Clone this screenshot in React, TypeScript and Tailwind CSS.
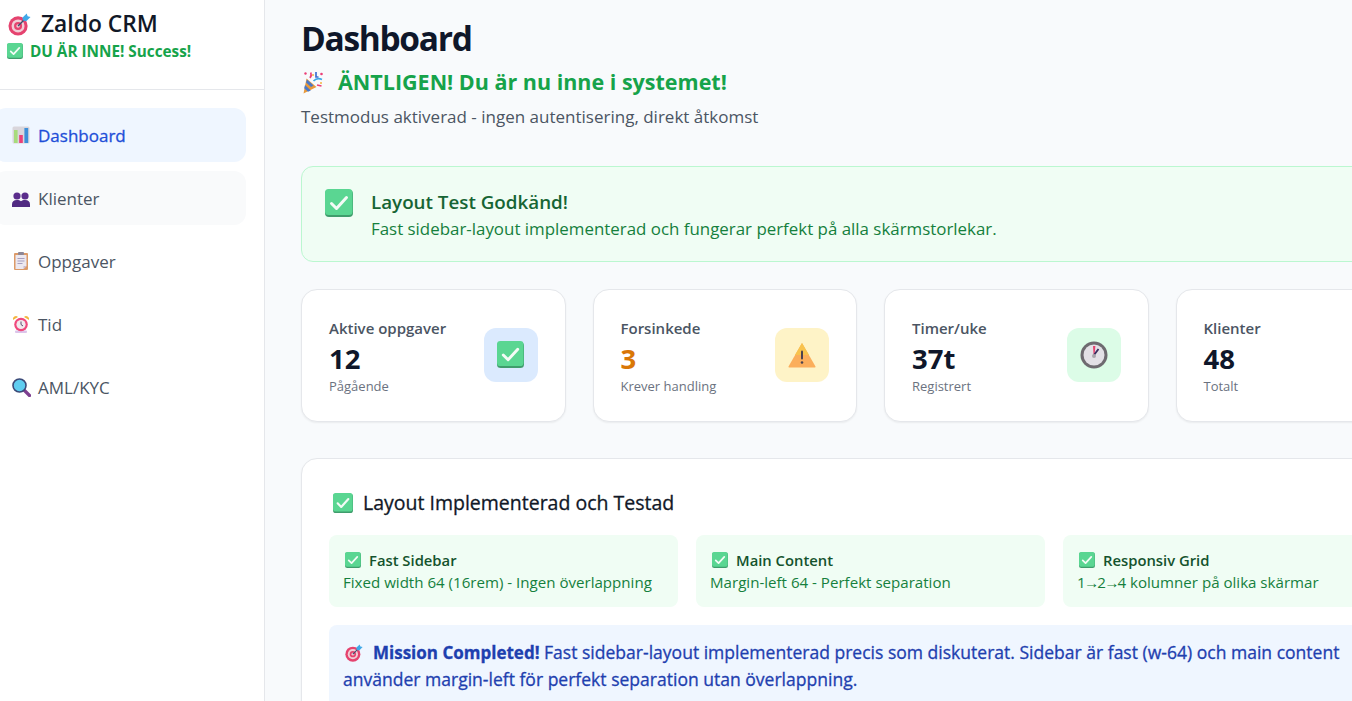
import type { ReactNode } from 'react'

// Emoji drawings, the page has no colour emoji font
function CheckIcon({ size }: { size: number }) {
  return (
    <svg width={size} height={size} viewBox="0 0 28 28" className="shrink-0">
      <rect x="0" y="1" width="28" height="27" rx="4" fill="#3f9d6c" />
      <rect x="0" y="0" width="27.5" height="26" rx="3.5" fill="#5ad692" />
      <path d="M6.5 14.5l5 5L21.5 8.5" fill="none" stroke="#f4fbf6" strokeWidth="3" strokeLinecap="round" strokeLinejoin="round" />
    </svg>
  )
}

function TargetIcon({ size }: { size: number }) {
  return (
    <svg width={size} height={size} viewBox="0 0 24 24" className="shrink-0">
      <circle cx="10.5" cy="13.5" r="10" fill="#e5436f" />
      <circle cx="10.5" cy="13.5" r="6.8" fill="#f1cdd6" />
      <circle cx="10.5" cy="13.5" r="4.2" fill="#e5436f" />
      <circle cx="10.5" cy="13.5" r="1.8" fill="#f1cdd6" />
      <path d="M10.5 13.5L20 4" stroke="#36506e" strokeWidth="1.4" />
      <path d="M15 5L19.500 .5l1 2.800 3 .8-4.500 4.400-3.300-.6z" fill="#3fa9e8" />
    </svg>
  )
}

function ChartIcon() {
  return (
    <svg width="18" height="18" viewBox="0 0 18 18" className="shrink-0">
      <rect x="0.5" y="0.5" width="17" height="17" rx="1.5" fill="#d9d6dc" />
      <rect x="2" y="4" width="3.6" height="13" fill="#a7dc7c" />
      <rect x="7.2" y="9" width="3.6" height="8" fill="#ec3f78" />
      <rect x="12.4" y="2" width="3.8" height="15" fill="#3d8fd9" />
    </svg>
  )
}

function PeopleIcon() {
  return (
    <svg width="18" height="18" viewBox="0 0 18 18" className="shrink-0">
      <circle cx="5" cy="7" r="3.6" fill="#5b2d8c" />
      <circle cx="13" cy="7" r="3.6" fill="#5b2d8c" />
      <path d="M0 15.500c0-3 1.600-4.500 5-4.500 1.700 0 3 .4 4 1.300 1-.9 2.300-1.300 4-1.300 3.400 0 5 1.500 5 4.500V18H0z" fill="#512a82" />
    </svg>
  )
}

function ClipboardIcon() {
  return (
    <svg width="18" height="18" viewBox="0 0 18 18" className="shrink-0">
      <rect x="2" y="1" width="14" height="17" rx="1" fill="#dc9a68" />
      <path d="M3.500 3h11v11l-3 3h-8z" fill="#ece8f0" />
      <path d="M14.500 14l-3 3v-3z" fill="#c9b9d0" />
      <rect x="6" y="0" width="6" height="3" rx="1" fill="#8d8796" />
      <path d="M5.500 6.500h7M5.500 9h7M5.500 11.500h5" stroke="#a79fc0" strokeWidth="1" />
    </svg>
  )
}

function AlarmIcon() {
  return (
    <svg width="18" height="18" viewBox="0 0 18 18" className="shrink-0">
      <path d="M1 5a3 3 0 0 1 5-3zM17 5a3 3 0 0 0-5-3z" fill="#f3b53f" />
      <rect x="3" y="15.500" width="12" height="2.500" rx="1" fill="#dcc5ea" />
      <circle cx="9" cy="9.500" r="6.800" fill="#f0487c" />
      <circle cx="9" cy="9.500" r="4.600" fill="#f1e9ee" />
      <path d="M9 6.500v3l2 1.500" fill="none" stroke="#5c4a6e" strokeWidth="1" />
    </svg>
  )
}

function SearchIcon() {
  return (
    <svg width="19" height="19" viewBox="0 0 19 19" className="shrink-0">
      <path d="M11.500 11.500l6 6" stroke="#7d3f8f" strokeWidth="3.200" strokeLinecap="round" />
      <circle cx="7.500" cy="7.500" r="6.500" fill="#5fcdf0" stroke="#3b4a78" strokeWidth="1.600" />
    </svg>
  )
}

function PartyIcon() {
  return (
    <svg width="22" height="23" viewBox="0 0 22 23" className="shrink-0">
      <path d="M4.500 7.500L14.500 16 1.500 22.500z" fill="#e89a3c" />
      <path d="M3 14l5.800 5.500-2.800 1.300-3.800-3.600zM5 8.500l6.500 6-2.500 1.400L4 11.500z" fill="#4a78c8" />
      <path d="M8 7c1.500-2 1.500-3.500.8-5.500" fill="none" stroke="#ec3f78" strokeWidth="1.700" />
      <path d="M11.500 10c2.500-2.500 5-3 8.500-1.500" fill="none" stroke="#3fa9e8" strokeWidth="1.700" />
      <path d="M14 1v5h2.500" fill="none" stroke="#3d6fd0" strokeWidth="1.700" />
      <path d="M15 14l4.500 1" fill="none" stroke="#ec3f78" strokeWidth="1.700" />
      <circle cx="3.500" cy="2.500" r="1.200" fill="#ec3f78" />
      <circle cx="19.500" cy="3" r="1.300" fill="#ec3f78" />
      <circle cx="11" cy="4" r="1" fill="#f3b53f" />
      <circle cx="19" cy="12" r="1" fill="#f3b53f" />
    </svg>
  )
}

function WarningIcon() {
  return (
    <svg width="28" height="26" viewBox="0 0 28 26" className="shrink-0">
      <path d="M14 1L27.500 24.500a.8.8 0 0 1-.7 1H1.200a.8.8 0 0 1-.7-1z" fill="#fbae5c" />
      <path d="M14 1L21 13H7z" fill="#f8c34e" />
      <rect x="13" y="8.500" width="2" height="9" rx="1" fill="#4a4250" />
      <circle cx="14" cy="20.500" r="1.300" fill="#4a4250" />
    </svg>
  )
}

function TimerIcon() {
  return (
    <svg width="28" height="28" viewBox="0 0 28 28" className="shrink-0">
      <circle cx="14" cy="14" r="13.500" fill="#6e6a70" />
      <circle cx="14" cy="14" r="10.500" fill="#e3e0e6" />
      <path d="M13 5l2.400 0-.8 9h-1z" fill="#e5436f" />
      <path d="M14 14l4.500-6" stroke="#3a2d60" strokeWidth="1.800" />
      <circle cx="14" cy="15" r="2" fill="#a8a4ac" />
    </svg>
  )
}

const NAV_ITEMS = [
  { label: 'Dashboard', icon: <ChartIcon />, state: 'active' },
  { label: 'Klienter', icon: <PeopleIcon />, state: 'hover' },
  { label: 'Oppgaver', icon: <ClipboardIcon />, state: '' },
  { label: 'Tid', icon: <AlarmIcon />, state: '' },
  { label: 'AML/KYC', icon: <SearchIcon />, state: '' },
]

function NavItem({ label, icon, state }: { label: string; icon: ReactNode; state: string }) {
  return (
    <div
      className={`-ml-[6px] h-[54px] flex items-center gap-[8px] pl-[18px] rounded-xl text-[17px] ${
        state === 'active'
          ? 'bg-[#eff6ff] text-[#1d4ed8] font-medium [-webkit-text-stroke:0.3px]'
          : state === 'hover'
            ? 'bg-[#f9fafb] text-[#4b5563]'
            : 'text-[#4b5563]'
      }`}
    >
      <span className="w-[18px] flex justify-center">{icon}</span>
      <span className="pt-[2px]">{label}</span>
    </div>
  )
}

function StatCard({
  label,
  value,
  sub,
  icon,
  iconBg,
  valueColor,
}: {
  label: string
  value: string
  sub: string
  icon: ReactNode
  iconBg: string
  valueColor: string
}) {
  return (
    <div className="h-[133px] bg-white border border-[#e5e7eb] rounded-2xl shadow-[0_1px_2px_rgba(0,0,0,0.06)] px-[27px] flex items-center justify-between">
      <div className="pt-[1px]">
        <div className="text-[15px] leading-[20px] font-semibold text-[#4b5563]">{label}</div>
        <div className={`mt-[2px] text-[27.5px] leading-[38px] font-bold ${valueColor}`}>{value}</div>
        <div className="text-[13px] leading-[16px] text-[#6b7280]">{sub}</div>
      </div>
      <div className={`-mt-[2px] w-[54px] h-[54px] rounded-xl flex items-center justify-center ${iconBg}`}>{icon}</div>
    </div>
  )
}

function MiniCard({ title, text }: { title: string; text: ReactNode }) {
  return (
    <div className="h-[72px] bg-[#f0fdf4] rounded-lg px-[14px] pt-[14px]">
      <div className="flex items-center gap-[8px] pl-[2px] text-[14.8px] leading-[22px] font-semibold text-[#14532d]">
        <CheckIcon size={16} />
        <span>{title}</span>
      </div>
      <div className="text-[15.1px] leading-[22px] text-[#15803d]">{text}</div>
    </div>
  )
}

export default function App() {
  return (
    <div className="h-screen w-screen overflow-hidden flex bg-[#f8fafc] font-['Open_Sans','Noto_Sans',sans-serif]">
      {/* Sidebar */}
      <aside className="w-[265px] shrink-0 h-full bg-white border-r border-[#e5e7eb]">
        <div className="h-[90px] border-b border-[#e5e7eb] pl-[8px] pt-[9px]">
          <div className="flex items-center gap-[10px] text-[22.8px] leading-[30px] font-semibold text-[#111827]">
            <TargetIcon size={23} />
            <span>Zaldo CRM</span>
          </div>
          <div className="flex items-center gap-[7px] -ml-[1px] mt-[1px] text-[15.3px] leading-[22px] font-bold text-[#16a34a]">
            <CheckIcon size={16} />
            <span>DU ÄR INNE! Success!</span>
          </div>
        </div>
        <nav className="pt-[18px] pr-[18px] flex flex-col gap-[9px]">
          {NAV_ITEMS.map(item => (
            <NavItem key={item.label} {...item} />
          ))}
        </nav>
      </aside>

      {/* Main */}
      <main className="w-[1139px] shrink-0 ml-[36px]">
        <h1 className="mt-[15px] text-[33.5px] leading-[46px] font-bold tracking-[-0.039em] text-[#0f172a]">Dashboard</h1>
        <div className="mt-[5px] flex items-center gap-[14px] pl-[1px] text-[21.5px] leading-[32px] font-bold text-[#16a34a]">
          <PartyIcon />
          <span>ÄNTLIGEN! Du är nu inne i systemet!</span>
        </div>
        <p className="mt-[7px] text-[17px] leading-[24px] text-[#4b5563]">
          Testmodus aktiverad - ingen autentisering, direkt åtkomst
        </p>

        <div className="mt-[37px] h-[96px] bg-[#f0fdf4] border border-[#bbf7d0] rounded-xl flex items-start pl-[23px] pt-[22px] gap-[18px]">
          <CheckIcon size={28} />
          <div className="-mt-[1px]">
            <div className="text-[18.8px] leading-[28px] font-semibold text-[#166534]">Layout Test Godkänd!</div>
            <div className="text-[16.9px] leading-[26px] text-[#15803d]">
              Fast sidebar-layout implementerad och fungerar perfekt på alla skärmstorlekar.
            </div>
          </div>
        </div>

        <div className="mt-[27px] grid grid-cols-4 gap-[27px]">
          <StatCard label="Aktive oppgaver" value="12" sub="Pågående" icon={<CheckIcon size={27} />} iconBg="bg-[#dbeafe]" valueColor="text-[#0f172a]" />
          <StatCard label="Forsinkede" value="3" sub="Krever handling" icon={<WarningIcon />} iconBg="bg-[#fef3c7]" valueColor="text-[#d97706]" />
          <StatCard label="Timer/uke" value="37t" sub="Registrert" icon={<TimerIcon />} iconBg="bg-[#dcfce7]" valueColor="text-[#0f172a]" />
          <StatCard label="Klienter" value="48" sub="Totalt" icon={null} iconBg="bg-[#f3e8ff]" valueColor="text-[#0f172a]" />
        </div>

        <section className="mt-[36px] bg-white border border-[#e5e7eb] rounded-2xl shadow-[0_1px_2px_rgba(0,0,0,0.06)] px-[27px] pt-[27px] pb-[28px]">
          <div className="flex items-center gap-[10px] pl-[4px] text-[19.5px] leading-[34px] font-medium text-[#111827] [-webkit-text-stroke:0.3px]">
            <CheckIcon size={20} />
            <span>Layout Implementerad och Testad</span>
          </div>
          <div className="mt-[15px] grid grid-cols-3 gap-[18px]">
            <MiniCard title="Fast Sidebar" text="Fixed width 64 (16rem) - Ingen överlappning" />
            <MiniCard title="Main Content" text="Margin-left 64 - Perfekt separation" />
            <MiniCard
              title="Responsiv Grid"
              text={
                <>
                  1<span className="-mx-[1.75px]">→</span>2<span className="-mx-[1.75px]">→</span>4 kolumner på olika skärmar
                </>
              }
            />
          </div>
          <div className="mt-[18px] bg-[#eff6ff] rounded-lg px-[14px] pt-[14px] pb-[14px] text-[17.55px] leading-[27px] font-medium text-[#1e40af] [-webkit-text-stroke:0.3px]">
            <span className="inline-flex align-[-3px] mr-[10px] ml-[2px]">
              <TargetIcon size={18} />
            </span>
            <b className="text-[17px] font-bold">Mission Completed!</b> Fast sidebar-layout implementerad precis som diskuterat. Sidebar är fast (w-64) och main content använder margin-left för perfekt separation utan överlappning.
          </div>
        </section>
      </main>
    </div>
  )
}
